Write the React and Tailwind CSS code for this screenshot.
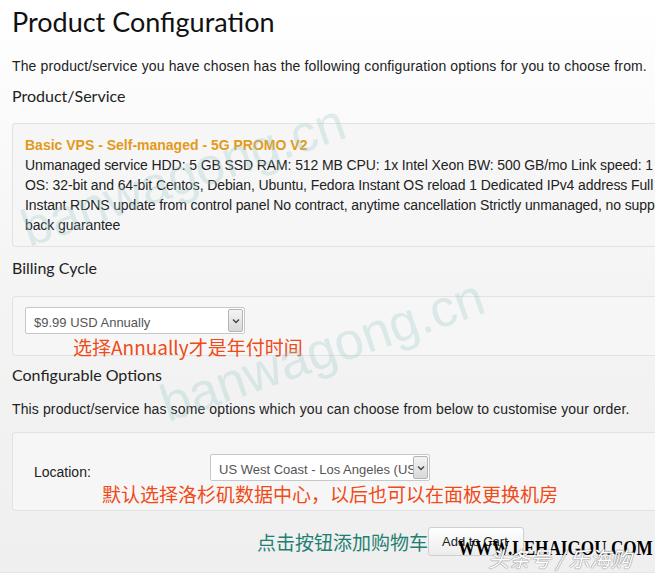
import React from 'react';

// font stacks as arbitrary classes
const SANS = "font-['Liberation_Sans',Arial,sans-serif]";
const HEAD = "font-['Lato','Open_Sans',sans-serif]";
const CJK = "font-['Noto_Sans_CJK_SC','Noto_Sans',sans-serif]";

function Select({ value, className }) {
    return (
        <div className={`flex h-[27px] items-stretch rounded-[2px] border border-[#c8c8c8] bg-white ${className}`}>
            <div className={`flex-1 overflow-hidden whitespace-nowrap pl-[8px] pt-[5px] text-[13px] text-[#555] ${SANS}`}>
                {value}
            </div>
            <div className="my-[1px] mr-[1px] flex w-[15px] items-center justify-center rounded-[2px] border border-[#b5b5b5] bg-gradient-to-b from-[#f4f4f4] to-[#d8d8d8]">
                <svg width="8" height="6" viewBox="0 0 8 6">
                    <path d="M1 1.5 L4 4.5 L7 1.5" fill="none" stroke="#444" strokeWidth="1.4" />
                </svg>
            </div>
        </div>
    );
}

function Panel({ className, children }) {
    return (
        <div className={`rounded-l-[4px] border border-r-0 border-[#e2e2e2] bg-[#f6f6f6] ${className}`}>
            {children}
        </div>
    );
}

export default function App() {
    return (
        <div className="relative h-[576px] w-[655px] overflow-hidden bg-gradient-to-b from-white via-[#f4f4f4] to-[#efefef]">
            <div className="pl-[12px]">
                <h1 className={`pt-[4px] text-[27px] leading-[36px] text-[#111] ${HEAD}`}>Product Configuration</h1>
                <p className={`mt-[18px] whitespace-nowrap text-[14px] leading-[16px] tracking-[0.14px] text-[#222] ${SANS}`}>
                    The product/service you have chosen has the following configuration options for you to choose from.
                </p>
                <h2 className={`mt-[12px] text-[16px] leading-[20px] text-[#222] ${HEAD}`}>Product/Service</h2>

                <Panel className="mt-[17px] h-[124px] pl-[12px] pt-[11px]">
                    <div className={`text-[14px] font-bold leading-[20px] text-[#e39a1a] ${SANS}`}>Basic VPS - Self-managed - 5G PROMO V2</div>
                    <div className={`whitespace-nowrap text-[14px] leading-[20px] tracking-[-0.1px] text-[#222] ${SANS}`}>
                        <div>Unmanaged service HDD: 5 GB SSD RAM: 512 MB CPU: 1x Intel Xeon BW: 500 GB/mo Link speed: 1 Gigabit</div>
                        <div>OS: 32-bit and 64-bit Centos, Debian, Ubuntu, Fedora Instant OS reload 1 Dedicated IPv4 address Full root access</div>
                        <div>Instant RDNS update from control panel No contract, anytime cancellation Strictly unmanaged, no support 30 days money</div>
                        <div>back guarantee</div>
                    </div>
                </Panel>

                <h2 className={`mt-[11px] text-[16px] leading-[20px] text-[#222] ${HEAD}`}>Billing Cycle</h2>
                <Panel className="mt-[18px] h-[60px] pl-[12px] pt-[10px]">
                    <Select value="$9.99 USD Annually" className="w-[220px]" />
                    <div className={`ml-[48px] mt-[1px] text-[19px] leading-[24px] text-[#f04a16] ${CJK}`}>选择Annually才是年付时间</div>
                </Panel>

                <h2 className={`mt-[9px] text-[16px] leading-[20px] text-[#222] ${HEAD}`}>Configurable Options</h2>
                <p className={`mt-[16px] text-[14px] leading-[16px] tracking-[0.12px] text-[#222] ${SANS}`}>
                    This product/service has some options which you can choose from below to customise your order.
                </p>
                <Panel className="mt-[15px] h-[79px] pt-[21px]">
                    <div className="flex items-start">
                        <div className={`ml-[21px] w-[176px] pt-[10px] text-[14px] leading-[16px] text-[#222] ${SANS}`}>Location:</div>
                        <Select value="US West Coast - Los Angeles (US)" className="w-[220px]" />
                    </div>
                    <div className={`ml-[89px] mt-[1px] text-[19px] leading-[24px] text-[#f04a16] ${CJK}`}>
                        默认选择洛杉矶数据中心，以后也可以在面板更换机房
                    </div>
                </Panel>

                <div className="mt-[16px] flex items-center pl-[245px]">
                    <span className={`text-[19px] leading-[24px] text-[#1f7f72] ${CJK}`}>点击按钮添加购物车</span>
                    <button className={`h-[29px] w-[96px] rounded-[3px] border border-[#cfcfcf] bg-gradient-to-b from-white to-[#ececec] pl-[13px] text-left text-[13px] text-[#222] ${SANS}`}>
                        Add to Cart
                    </button>
                </div>
            </div>

            <div className="absolute bottom-0 left-0 h-[4px] w-full border-t border-[#e6e6e6] bg-white" />

            {/* watermarks laid over the page */}
            <div className={`pointer-events-none absolute left-[14px] top-[149px] -rotate-[19deg] text-[52px] leading-none text-[#9ccaca] opacity-30 ${SANS}`}>
                banwagong.cn
            </div>
            <div className={`pointer-events-none absolute left-[153px] top-[324px] -rotate-[19deg] text-[52px] leading-none text-[#9ccaca] opacity-30 ${SANS}`}>
                banwagong.cn
            </div>
            <div className="pointer-events-none absolute left-[458px] top-[537px] origin-left scale-x-[0.78] whitespace-nowrap font-['Liberation_Serif',serif] text-[22px] font-bold leading-none text-black">
                WWW.LEHAIGOU.COM
            </div>
            <div className={`pointer-events-none absolute left-[488px] top-[548px] whitespace-nowrap text-[21px] italic leading-none text-white [text-shadow:0_0_1px_#777,0_0_1px_#777] ${CJK}`}>
                头条号 / 乐海购
            </div>
        </div>
    );
}
